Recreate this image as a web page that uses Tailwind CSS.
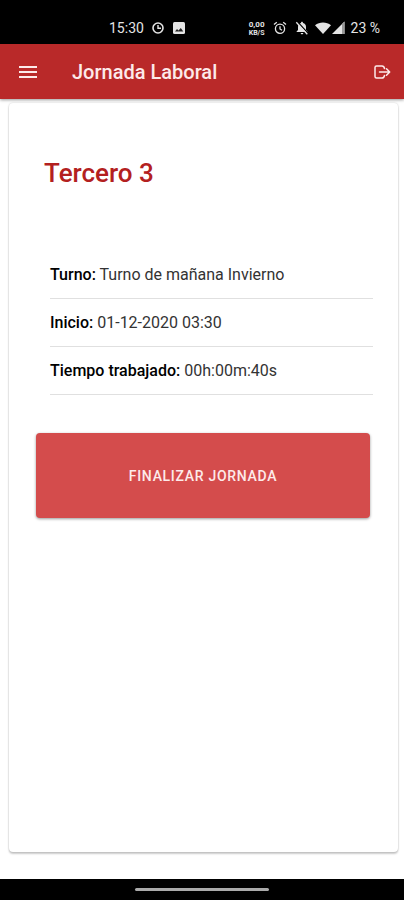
<!DOCTYPE html>
<html lang="es">
<head>
<meta charset="utf-8">
<meta name="viewport" content="width=device-width, initial-scale=1">
<title>Jornada Laboral</title>
<script src="https://cdn.jsdelivr.net/npm/@tailwindcss/browser@4"></script>
</head>
<body class="flex min-h-screen flex-col bg-white font-['Roboto',sans-serif] text-[#222]">
  <div class="flex h-11 shrink-0 items-center justify-between bg-black pt-3 pr-6 pl-[109px] text-sm text-[#e4e4e4]">
    <div class="flex items-center gap-2">
      <span>15:30</span>
      <svg class="size-3.5" viewBox="0 0 14 14" fill="none" stroke="currentColor" stroke-width="1.6" aria-hidden="true"><circle cx="6" cy="7" r="5"/><path d="M6 4v3.300h3" stroke-width="1.400"/></svg>
      <svg class="-ml-0.5 size-3.5" viewBox="0 0 14 14" aria-hidden="true"><rect x="1" y="1" width="12" height="12" rx="1.500" fill="currentColor"/><path d="M3 10.500 5 8l1.500 1.600L8.800 7 11.300 10.500z" fill="#222"/></svg>
    </div>
    <div class="flex items-center">
      <span class="mr-2 flex flex-col items-center text-[8px] leading-[9px] font-bold"><span>0,00</span><span class="text-[7px] leading-[8px]">KB/S</span></span>
      <svg class="mr-2 size-3.5" viewBox="0 0 14 14" fill="none" stroke="currentColor" stroke-width="1.300" aria-hidden="true"><circle cx="7" cy="7.800" r="4.600"/><path d="M7 5.300V8l2 1.200M1 3.600 3.800 1.300M13 3.600l-2.800-2.300"/></svg>
      <svg class="mr-1.5 size-3.5" viewBox="0 0 14 14" aria-hidden="true"><path d="M7 .8c.7 0 1 .5 1 1.100 2 .5 3 2 3 4v3l1.400 1.500v.7H1.600v-.7L3 8.900v-3c0-2 1-3.500 3-4 0-.6.3-1.100 1-1.100zM5.700 11.900h2.600c0 .8-.5 1.300-1.300 1.300s-1.300-.5-1.300-1.300z" fill="currentColor"/><path d="m2.400.8 11 12" stroke="#000" stroke-width="1.300"/><path d="m1.300 1.300 11 12" stroke="currentColor" stroke-width="1.300"/></svg>
      <svg class="h-3.5 w-4" viewBox="0 0 16 14" aria-hidden="true"><path d="M0 4.200C4.500.6 11.500.6 16 4.200L8 13z" fill="currentColor"/></svg>
      <svg class="mr-1.5 size-3.5" viewBox="0 0 14 14" aria-hidden="true"><path d="M13.500.5V13H1z" fill="currentColor"/><path d="M13.500.5V13H11V3z" fill="#999"/></svg>
      <span>23 %</span>
    </div>
  </div>

  <header class="z-10 flex h-[55px] shrink-0 items-center bg-[#b92929] pr-3 pl-[18px] text-[#fdeaea] shadow-[0_1px_3px_rgba(0,0,0,0.4)]">
    <button type="button" aria-label="Menú">
      <svg class="size-5" viewBox="0 0 20 20" stroke="currentColor" stroke-width="2" aria-hidden="true"><path d="M1 5h18M1 10h18M1 15h18"/></svg>
    </button>
    <h1 class="ml-[34px] flex-1 text-xl font-medium">Jornada Laboral</h1>
    <button type="button" aria-label="Cerrar sesión">
      <svg class="size-5" viewBox="0 0 20 20" fill="none" stroke="currentColor" stroke-width="1.500" stroke-linecap="round" stroke-linejoin="round" aria-hidden="true"><path d="M12.500 6.500Q12 4 10 4H4.500Q3 4 3 5.500v9Q3 16 4.500 16H10q2 0 2.500-2.500M7.500 10H17.500M14.500 6.800 17.700 10l-3.200 3.200"/></svg>
    </button>
  </header>

  <main class="flex flex-1 flex-col pt-1 pr-1.5 pb-[27px] pl-[9px]">
    <section class="flex flex-1 flex-col rounded-sm bg-white pt-[52px] pr-7 pl-[27px] shadow-[0_2px_2px_rgba(0,0,0,0.2),0_0_2px_rgba(0,0,0,0.2)]">
      <h2 class="px-2 text-[26px] leading-9 font-medium text-[#b32020]">Tercero 3</h2>
      <ul class="mt-15 mr-[-3px] ml-3.5 text-base leading-[47px] text-[#333]">
        <li class="border-b border-[#e0e0e0]"><strong class="font-medium text-black">Turno:</strong> Turno de mañana Invierno</li>
        <li class="border-b border-[#e0e0e0]"><strong class="font-medium text-black">Inicio:</strong> 01-12-2020 03:30</li>
        <li class="border-b border-[#e0e0e0]"><strong class="font-medium text-black">Tiempo trabajado:</strong> 00h:00m:40s</li>
      </ul>
      <button type="button" class="mt-[38px] h-[85px] rounded-sm bg-[#d44c4c] text-sm font-medium tracking-wider text-[#fdeaea] uppercase shadow-[0_1px_3px_rgba(0,0,0,0.4)]">Finalizar jornada</button>
    </section>
  </main>

  <footer class="flex h-[21px] shrink-0 items-center justify-center bg-black">
    <div class="h-[3px] w-1/3 rounded-full bg-[#aaa]"></div>
  </footer>
</body>
</html>
